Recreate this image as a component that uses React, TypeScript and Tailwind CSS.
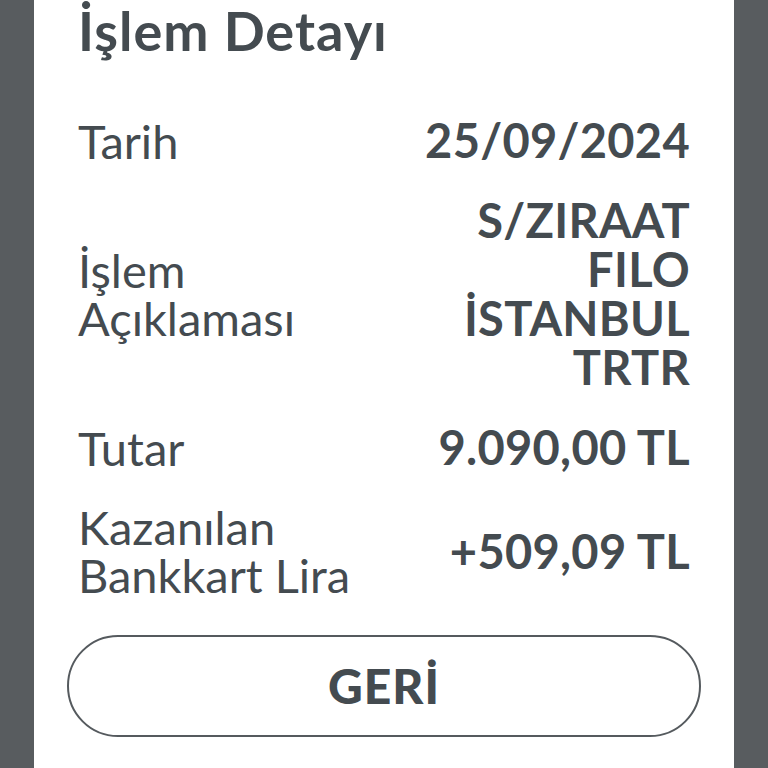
const rows = [
  { label: ['Tarih'], value: ['25/09/2024'] },
  {
    label: ['İşlem', 'Açıklaması'],
    value: ['S/ZIRAAT', 'FILO', 'İSTANBUL', 'TRTR'],
  },
  { label: ['Tutar'], value: ['9.090,00 TL'] },
  { label: ['Kazanılan', 'Bankkart Lira'], value: ['+509,09 TL'] },
];

export default function App() {
  return (
    <div
      className="flex h-[768px] w-[768px] justify-center overflow-hidden bg-[#585c5f] text-[#444b50]"
      style={{ fontFamily: 'Lato, "Noto Sans", sans-serif' }}
    >
      <div className="flex w-[700px] flex-col bg-white px-[44px]">
        <h1 className="mt-[1px] text-[54px] font-bold leading-[60px] tracking-[1px]">
          İşlem Detayı
        </h1>

        <div className="mt-[55px] flex flex-col gap-[31px]">
          {rows.map((row, i) => (
            <div key={i} className="flex items-center justify-between">
              <div className="text-[47px] leading-[48px]">
                {row.label.map((l) => (
                  <div key={l}>{l}</div>
                ))}
              </div>
              <div className="text-right text-[47px] font-bold leading-[49px] tracking-[0.3px]">
                {row.value.map((v) => (
                  <div key={v}>{v}</div>
                ))}
              </div>
            </div>
          ))}
        </div>

        <button className="mx-[-11px] mt-[36px] flex h-[102px] items-center justify-center rounded-full border-2 border-[#555a5e] text-[48px] font-black tracking-[1px]">
          GERİ
        </button>
      </div>
    </div>
  );
}
